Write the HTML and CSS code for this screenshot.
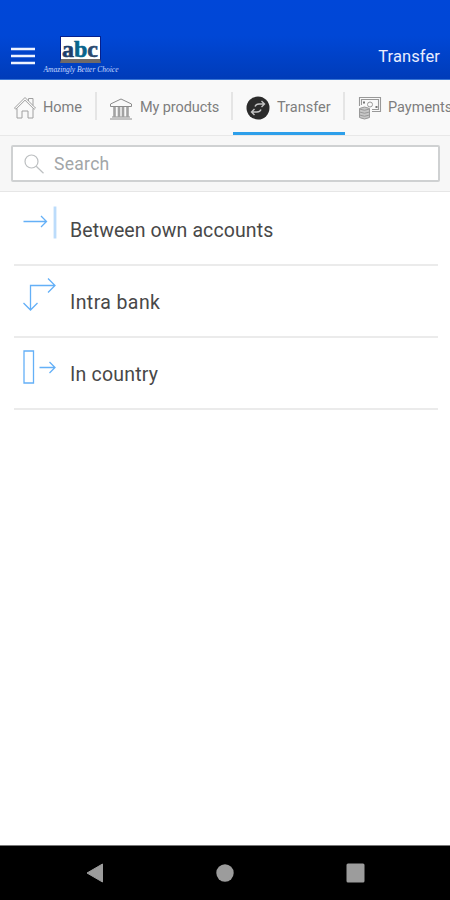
FILE: index.html
```html
<!DOCTYPE html>
<html lang="en">
<head>
<meta charset="utf-8">
<title>Transfer</title>
<link rel="stylesheet" href="styles.css">
</head>
<body>
<div class="app">
  <header class="header">
    <svg class="menu" width="24" height="18" viewBox="0 0 24 18"><path d="M0 2h24M0 9h24M0 16h24" stroke="#eef3ff" stroke-width="2.6"/></svg>
    <div class="brand">
      <div class="logo"><span class="logo-a">a</span><span class="logo-b">b</span><span class="logo-c">c</span></div>
      <div class="slogan">Amazingly Better Choice</div>
    </div>
    <h1 class="title">Transfer</h1>
  </header>

  <nav class="tabs">
    <a class="tab home">
      <svg width="24" height="24" viewBox="0 0 24 24" fill="none" stroke="#a0a0a0" stroke-width="1"><path d="M1.500 12L12 1.500 22.500 12l-1.300 1.300L12 4.200l-9.200 9.100zM4 12.500v9.500h5v-7h6v7h5v-9.500M15.500 5V2.500H20v7"/></svg>
      <span>Home</span>
    </a>
    <a class="tab products">
      <svg width="24" height="24" viewBox="0 0 24 24" fill="none" stroke="#8c8c8c" stroke-width="1"><path d="M1.500 10.500v-2.500L12 3l10.500 5v2.500z"/><path d="M3 21h18M1 23h22" /><path d="M5.500 11v10M10 11v10M14 11v10M18.500 11v10" stroke="#a2a2a2" stroke-width="2.600"/></svg>
      <span>My products</span>
    </a>
    <a class="tab transfer">
      <svg width="24" height="24" viewBox="0 0 24 24" fill="none"><circle cx="12" cy="12" r="11.500" fill="#2b2b2b"/><path d="M9 10.500Q10 8 13 8h5M15.500 5l3 3-3 3M15 13.500Q14 16 11 16H6M8.500 13l-3 3 3 3" stroke="#c4c4c4" stroke-width="1.400"/></svg>
      <span>Transfer</span>
    </a>
    <a class="tab payments">
      <svg width="24" height="24" viewBox="0 0 24 24" fill="none" stroke="#999"><path d="M1.500 10V1.500h21v14H14M3.500 9V3.500h17v10H14" stroke-width="1.100"/><circle cx="12" cy="8.500" r="2.500"/><path d="M5 6.500h2M17.500 11h2" stroke="#777" stroke-width="2"/><path d="M1.500 12.500q5-3 10 0v9q-5 3-10 0z" fill="#c6c6c6"/><path d="M1.500 13q5 2.500 10 0M1.500 16q5 2.500 10 0M1.500 19q5 2.500 10 0"/></svg>
      <span>Payments</span>
    </a>
  </nav>

  <div class="search-bar">
    <div class="search">
      <svg width="20" height="20" viewBox="0 0 20 20" fill="none" stroke="#bcbfc1" stroke-width="1.200"><circle cx="7.500" cy="7.500" r="6.500"/><path d="M12.200 12.200L19.500 19.300"/></svg>
      <span>Search</span>
    </div>
  </div>

  <main class="list">
    <a class="row own">
      <svg width="36" height="36" viewBox="0 0 36 36" fill="none" stroke="#64b0f7" stroke-width="1.300"><path d="M1.500 15.500h23M19 10l5.500 5.500L19 21"/><path d="M33 .5v32" stroke="#bcdcfb" stroke-width="2.800"/></svg>
      <span>Between own accounts</span>
    </a>
    <a class="row intra">
      <svg width="36" height="36" viewBox="0 0 36 36" fill="none" stroke="#64b0f7" stroke-width="1.300"><path d="M8.500 32V7.500H33M26 .5l7 7-7 7M1.500 25l7 7 7-7"/></svg>
      <span>Intra bank</span>
    </a>
    <a class="row country">
      <svg width="36" height="36" viewBox="0 0 36 36" fill="none" stroke="#64b0f7" stroke-width="1.300"><path d="M2 1h9.500v32H2zM17.500 17.500H33M27.500 12l5.500 5.500-5.500 5.500"/></svg>
      <span>In country</span>
    </a>
  </main>

  <footer class="system">
    <svg width="18" height="20" viewBox="0 0 18 20"><path d="M1 10L16.500 1v18z" fill="#9c9c9c" stroke="#9c9c9c" stroke-linejoin="round"/></svg>
    <svg width="18" height="18" viewBox="0 0 18 18"><circle cx="9" cy="9" r="8.700" fill="#9c9c9c"/></svg>
    <svg width="19" height="20" viewBox="0 0 19 20"><rect x=".5" y=".5" width="18" height="19" rx="1.500" fill="#9c9c9c"/></svg>
  </footer>
</div>
</body>
</html>
```
FILE: styles.css
```css
* { box-sizing: border-box; }
body { margin: 0; font-family: Roboto, sans-serif; background: #fff; }
svg { display: block; flex: none; }
.app { width: 450px; height: 900px; display: flex; flex-direction: column; overflow: hidden; }

.header {
  height: 80px; flex: none; display: flex; align-items: flex-start;
  padding: 36px 10px 0 11px;
  background: linear-gradient(#0047d8 0, #0047d6 36px, #003cb9 79px);
  border-bottom: 1px solid #3976d5;
}
.menu { margin-top: 11px; }
.brand { width: 76px; margin-left: 8px; display: flex; flex-direction: column; align-items: center; }
.logo {
  width: 41px; height: 27px; margin-left: -2px; display: flex; justify-content: center;
  background: #fff; border: 1px solid #06208c; border-bottom: 4px solid #6f6a69;
  font: bold 24px/24px "Liberation Serif", serif; -webkit-text-stroke: .6px;
}
.logo-a { color: #1e3e6b; }
.logo-b { color: #08648c; }
.logo-c { color: #2a4a70; }
.slogan {
  margin-top: 2px; white-space: nowrap; color: #c6d8ff;
  font: italic 7.500px/10px "Liberation Serif", serif;
}
.title { margin: 10px 0 0 auto; color: #e9edff; font-size: 16.500px; line-height: 22px; font-weight: 400; letter-spacing: .1px; }

.tabs { height: 56px; flex: none; display: flex; background: #f9f9f9; border-bottom: 1px solid #e8e8e8; }
.tab {
  position: relative; flex: none; display: flex; align-items: center; gap: 6px;
  height: 55px; padding-left: 13px; color: #7e7e7e;
  font-size: 14.500px; white-space: nowrap;
}
.tab:not(:last-child)::after {
  content: ""; position: absolute; right: 0; top: 12px; width: 2px; height: 28px; background: #e5e5e5;
}
.home { width: 97px; }
.products { width: 136px; padding-left: 12px; gap: 7px; letter-spacing: -.1px; }
.transfer { width: 112px; border-bottom: 3px solid #2d9fea; padding-top: 3px; gap: 7px; }
.payments { gap: 6px; }

.search-bar { height: 56px; flex: none; padding: 9px 10px 9px 11px; background: #f7f7f7; border-bottom: 1px solid #e6e6e6; }
.search {
  height: 37px; display: flex; align-items: center; gap: 10px; padding-left: 11px;
  background: #fff; border: 2px solid #cfd1d2; border-radius: 2px;
  color: #a2a6a8; font-size: 17.500px; letter-spacing: .3px;
}

.list { flex: 1; padding: 2px 12px 0 14px; }
.row {
  height: 72px; display: flex; gap: 12px; padding: 12px 0 0 8px;
  border-bottom: 2px solid #ebebeb; color: #484848; font-size: 19.500px;
}
.row span { line-height: 24px; margin-top: 13px; }
.own { letter-spacing: .1px; }
.intra { letter-spacing: .4px; }
.country { letter-spacing: .2px; }

.system {
  height: 55px; flex: none; display: flex; align-items: center; justify-content: space-between;
  padding: 0 85px 0 86px; background: #000; border-top: 1px solid #777;
}
```
